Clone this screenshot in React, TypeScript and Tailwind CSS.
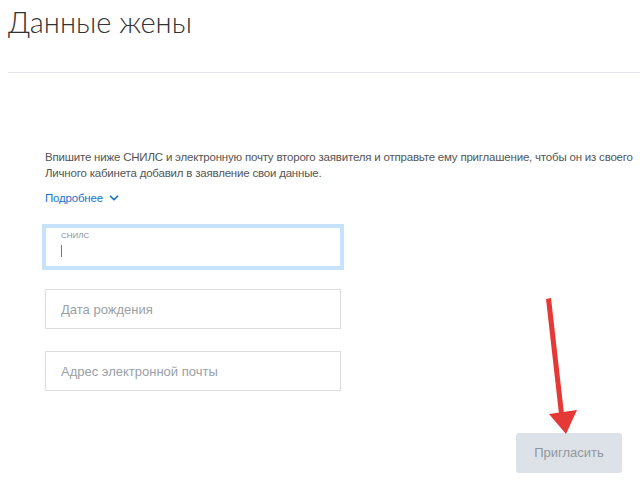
import { ChevronDown } from 'lucide-react';

export default function App() {
  return (
    <div className="relative w-[640px] h-[480px] overflow-hidden bg-white font-['Liberation_Sans',Arial,sans-serif]">
      <h1 className="pl-2 pt-[3px] text-[29px] leading-[37px] font-light text-[#333] font-['Lato','Open_Sans',sans-serif]">
        Данные жены
      </h1>
      <div className="ml-2 mt-[32px] h-px bg-[#e3e7eb]" />

      <div className="pl-[45px] pt-[76px]">
        <p className="whitespace-nowrap text-[11.5px] leading-[16px] tracking-[-0.2px] text-[#555]">
          Впишите ниже СНИЛС и электронную почту второго заявителя и отправьте ему приглашение, чтобы он из своего
          <br />
          Личного кабинета добавил в заявление свои данные.
        </p>
        <button className="mt-[9px] flex items-center gap-[4px] text-[11.5px] leading-[16px] tracking-[-0.2px] text-[#1a73c9]">
          Подробнее
          <ChevronDown className="h-[14px] w-[14px]" strokeWidth={3} />
        </button>

        <div className="mt-[21px] flex w-[296px] flex-col gap-[22px]">
          <div className="h-[40px] border border-[#c6e3fb] ring-[3px] ring-[#c6e3fb] bg-white px-[15px] pt-[3px]">
            <div className="text-[8px] leading-[10px] uppercase text-[#8a8f94]">СНИЛС</div>
            <div className="mt-[4px] h-[12px] w-px bg-[#777]" />
          </div>
          <input
            placeholder="Дата рождения"
            className="h-[40px] border border-[#dcdcdc] px-[15px] text-[13px] text-[#333] outline-none placeholder:text-[#9aa0a6]"
          />
          <input
            placeholder="Адрес электронной почты"
            className="h-[40px] border border-[#dcdcdc] px-[15px] text-[13px] text-[#333] outline-none placeholder:text-[#9aa0a6]"
          />
        </div>
      </div>

      <div className="absolute left-[516px] top-[433px]">
        <button className="h-[40px] w-[106px] rounded-[3px] bg-[#dce2e7] text-[13px] text-[#8f979e]">Пригласить</button>
      </div>

      <svg className="absolute left-0 top-0 pointer-events-none" width="640" height="480">
        <polygon points="546,299 551,298 564,414 559,414" fill="#e53935" />
        <polygon points="549,414 577,410 566,434" fill="#e53935" />
      </svg>
    </div>
  );
}
